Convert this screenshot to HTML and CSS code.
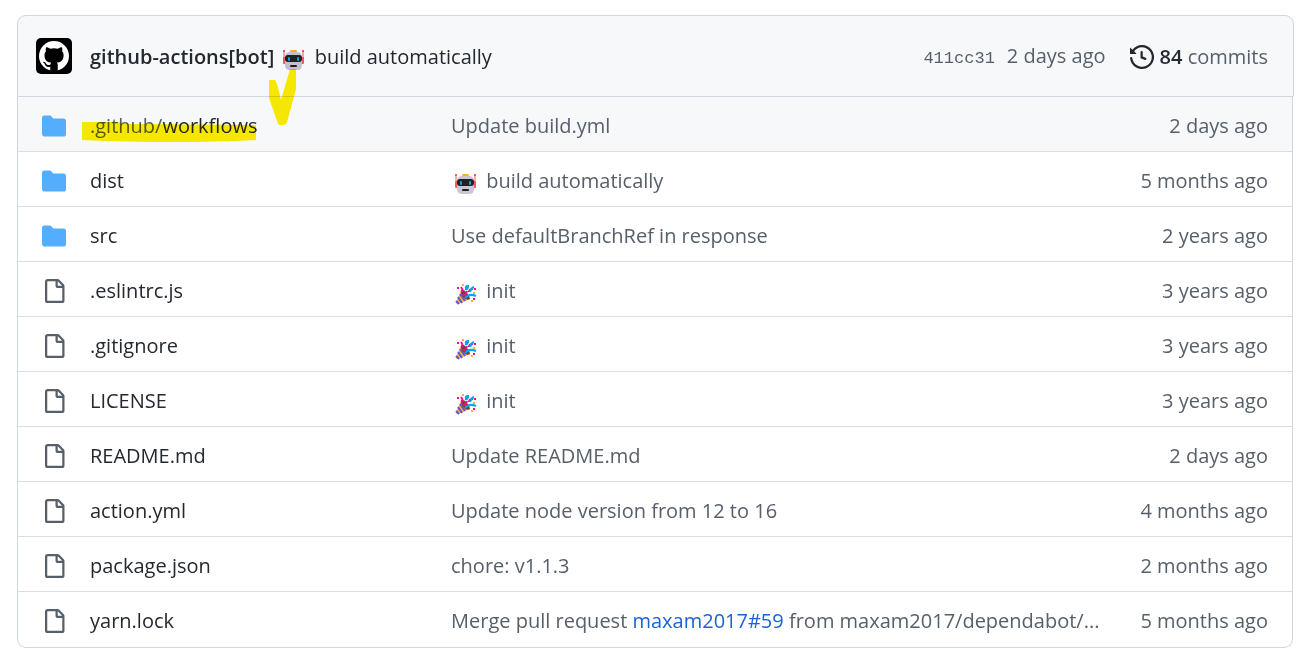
FILE: index.html
```
<!DOCTYPE html>
<html lang="en">

<head>
    <meta charset="UTF-8">
    <meta name="viewport" content="width=device-width, initial-scale=1">
    <title>Files</title>
    <link rel="stylesheet" href="styles.css">
</head>

<body>

    <!-- shared icons -->
    <svg class="sprite" aria-hidden="true">
        <symbol id="folder" viewBox="0 0 16 16">
            <path d="M1.75 1A1.75 1.75 0 0 0 0 2.75v10.5C0 14.216.784 15 1.75 15h12.5A1.75 1.75 0 0 0 16 13.25v-8.5A1.75 1.75 0 0 0 14.25 3H7.5a.25.25 0 0 1-.2-.1l-.9-1.2C6.07 1.26 5.55 1 5 1H1.75Z" />
        </symbol>
        <symbol id="file" viewBox="0 0 16 16">
            <path d="M2 1.75C2 .784 2.784 0 3.75 0h6.586c.464 0 .909.184 1.237.513l2.914 2.914c.329.328.513.773.513 1.237v9.586A1.75 1.75 0 0 1 13.25 16h-9.5A1.75 1.75 0 0 1 2 14.25Zm1.75-.25a.25.25 0 0 0-.25.25v12.5c0 .138.112.25.25.25h9.5a.25.25 0 0 0 .25-.25V6h-2.75A1.75 1.75 0 0 1 9 4.25V1.5Zm6.75.062V4.25c0 .138.112.25.25.25h2.688l-.011-.013-2.914-2.914-.013-.011Z" />
        </symbol>
        <symbol id="robot" viewBox="0 0 22 22">
            <path d="M1 2v12M20 2v12" stroke="#f8585f" stroke-width="1" />
            <circle cx="1" cy="2" r="1" fill="#f03040" />
            <circle cx="20" cy="2" r="1" fill="#f03040" />
            <rect x="0" y="8" width="3" height="7" rx="1" fill="#f8585f" />
            <rect x="18" y="8" width="3" height="7" rx="1" fill="#f8585f" />
            <path d="M6 3h9q4 1 4 5v8q0 5-5 5H7q-5 0-5-5V8q0-4 4-5Z" fill="#cdc4d6" />
            <rect x="7" y="1" width="7" height="2" rx="1" fill="#ffb02e" />
            <rect x="2" y="6" width="17" height="7" rx="3" fill="#212121" />
            <rect x="5" y="8" width="2" height="4" rx="1" fill="#00a6ed" />
            <rect x="14" y="8" width="2" height="4" rx="1" fill="#00a6ed" />
            <rect x="7" y="16" width="7" height="2" rx="1" fill="#212121" />
        </symbol>
        <symbol id="party" viewBox="0 0 22 22">
            <path d="M6 8 1 19q0 2 2 2l12-5Z" fill="#ffb02e" />
            <path d="m5 11 5 7M3 14l4 6M1 18l3 3" stroke="#5b55e0" stroke-width="2" />
            <path d="M6 7q3-1 6 3t3 6q-4 2-7-2T6 7Z" fill="#6d4534" />
            <path d="M6 9q3-1 0-5M8 12q3 0 4-4M14 9q0-3 4-3" stroke="#f70a8d" stroke-width="2" fill="none" />
            <path d="M10 6q3 1 3-3-3 0-2 3M10 15q4-5 11-2M15 9q1-4 4-5" stroke="#00a6ed" stroke-width="2" fill="none" />
            <path d="M2 4h2v2H2ZM19 5h2v2h-2ZM18 15h2v2h-2Z" fill="#f70a8d" />
            <path d="M7 1h2v2H7ZM18 9h2v2h-2ZM16 17h2v2h-2Z" fill="#ffb02e" />
        </symbol>
    </svg>

    <div class="commit">
        <svg class="avatar" viewBox="0 0 36 36" role="img" aria-label="github-actions">
            <rect width="36" height="36" rx="5" />
            <circle cx="18" cy="18" r="15" fill="#fff" />
            <path transform="translate(3 3) scale(1.875)" d="M5.47 15.59c.4.07.55-.17.55-.38 0-.19-.01-.82-.01-1.49-2.01.37-2.53-.49-2.69-.94-.09-.23-.48-.94-.82-1.13-.28-.15-.68-.52-.01-.53.63-.01 1.08.58 1.23.82.72 1.21 1.87.87 2.33.66.07-.52.28-.87.51-1.07-1.78-.2-3.64-.89-3.64-3.95 0-.87.31-1.59.82-2.15-.08-.2-.36-1.02.08-2.12 0 0 .67-.21 2.2.82.64-.18 1.32-.27 2-.27s1.36.09 2 .27c1.53-1.04 2.2-.82 2.2-.82.44 1.1.16 1.92.08 2.12.51.56.82 1.27.82 2.15 0 3.07-1.87 3.75-3.65 3.95.29.25.54.73.54 1.48 0 1.07-.01 1.93-.01 2.2 0 .21.15.46.55.38Q8 16.6 5.47 15.59Z" />
        </svg>
        <div class="commit-title">
            <a href="#" class="author">github-actions[bot]</a>
            <svg class="emoji" role="img" aria-label="robot"><use href="#robot" /></svg>
            <a href="#">build automatically</a>
            <svg class="tick" viewBox="0 0 28 58" aria-hidden="true">
                <path d="M0 12h6q2 2 6 20L21 1h6v20L18 54q-1 3-3 3h-4q-2 0-3-4L0 30Z" />
            </svg>
        </div>
        <div class="commit-meta">
            <div class="revision">
                <a href="#" class="sha">411cc31</a>
                <a href="#">2 days ago</a>
            </div>
            <a href="#" class="history">
                <svg class="icon" viewBox="0 0 16 16" aria-hidden="true"><path d="m.427 1.927 1.215 1.215a8.002 8.002 0 1 1-1.6 5.685.75.75 0 1 1 1.493-.154 6.5 6.5 0 1 0 1.18-4.458l1.358 1.358A.25.25 0 0 1 3.896 6H.25A.25.25 0 0 1 0 5.75V2.104a.25.25 0 0 1 .427-.177ZM7.75 4a.75.75 0 0 1 .75.75v2.992l2.028.812a.75.75 0 0 1-.557 1.392l-2.5-1A.751.751 0 0 1 7 8.25v-3.5A.75.75 0 0 1 7.75 4Z" /></svg>
                <span><strong>84</strong> commits</span>
            </a>
        </div>
    </div>

    <div class="files">
        <table>
            <tbody>
                <tr class="active">
                    <td class="type"><svg class="icon folder"><use href="#folder" /></svg></td>
                    <td class="name">
                        <a href="#"><span class="parent">.github/</span>workflows</a>
                        <svg class="marker" viewBox="0 0 174 20" preserveAspectRatio="none" aria-hidden="true">
                            <path d="M0 0h34l14 2 126 1v15q-80 4-174 0Z" />
                        </svg>
                    </td>
                    <td class="message"><a href="#">Update build.yml</a></td>
                    <td class="age">2 days ago</td>
                </tr>
                <tr>
                    <td class="type"><svg class="icon folder"><use href="#folder" /></svg></td>
                    <td class="name"><a href="#">dist</a></td>
                    <td class="message"><svg class="emoji" role="img" aria-label="robot"><use href="#robot" /></svg> <a href="#">build automatically</a></td>
                    <td class="age">5 months ago</td>
                </tr>
                <tr>
                    <td class="type"><svg class="icon folder"><use href="#folder" /></svg></td>
                    <td class="name"><a href="#">src</a></td>
                    <td class="message"><a href="#">Use defaultBranchRef in response</a></td>
                    <td class="age">2 years ago</td>
                </tr>
                <tr>
                    <td class="type"><svg class="icon"><use href="#file" /></svg></td>
                    <td class="name"><a href="#">.eslintrc.js</a></td>
                    <td class="message"><svg class="emoji" role="img" aria-label="tada"><use href="#party" /></svg> <a href="#">init</a></td>
                    <td class="age">3 years ago</td>
                </tr>
                <tr>
                    <td class="type"><svg class="icon"><use href="#file" /></svg></td>
                    <td class="name"><a href="#">.gitignore</a></td>
                    <td class="message"><svg class="emoji" role="img" aria-label="tada"><use href="#party" /></svg> <a href="#">init</a></td>
                    <td class="age">3 years ago</td>
                </tr>
                <tr>
                    <td class="type"><svg class="icon"><use href="#file" /></svg></td>
                    <td class="name"><a href="#">LICENSE</a></td>
                    <td class="message"><svg class="emoji" role="img" aria-label="tada"><use href="#party" /></svg> <a href="#">init</a></td>
                    <td class="age">3 years ago</td>
                </tr>
                <tr>
                    <td class="type"><svg class="icon"><use href="#file" /></svg></td>
                    <td class="name"><a href="#">README.md</a></td>
                    <td class="message"><a href="#">Update README.md</a></td>
                    <td class="age">2 days ago</td>
                </tr>
                <tr>
                    <td class="type"><svg class="icon"><use href="#file" /></svg></td>
                    <td class="name"><a href="#">action.yml</a></td>
                    <td class="message"><a href="#">Update node version from 12 to 16</a></td>
                    <td class="age">4 months ago</td>
                </tr>
                <tr>
                    <td class="type"><svg class="icon"><use href="#file" /></svg></td>
                    <td class="name"><a href="#">package.json</a></td>
                    <td class="message"><a href="#">chore: v1.1.3</a></td>
                    <td class="age">2 months ago</td>
                </tr>
                <tr>
                    <td class="type"><svg class="icon"><use href="#file" /></svg></td>
                    <td class="name"><a href="#">yarn.lock</a></td>
                    <td class="message"><a href="#">Merge pull request</a> <a href="#" class="issue">maxam2017#59</a> <a href="#">from maxam2017/dependabot/...</a></td>
                    <td class="age">5 months ago</td>
                </tr>
            </tbody>
        </table>
    </div>

</body>

</html>
```
FILE: styles.css
```
* {
    box-sizing: border-box;
}

body {
    margin: 0;
    padding: 15px 11px 13px 17px;
    background-color: #fff;
    color: #24292f;
    font-family: "Segoe UI", "Open Sans", "Noto Sans", sans-serif;
    font-size: 20px;
    line-height: 30px;
}

a {
    color: inherit;
    text-decoration: none;
}

svg {
    flex-shrink: 0;
}

.sprite {
    display: none;
}

.icon {
    display: block;
    width: 24px;
    height: 24px;
    fill: #57606a;
}

.folder {
    fill: #54aeff;
}

.emoji {
    display: inline-block;
    width: 22px;
    height: 22px;
    margin: 0 4px;
    vertical-align: -7px;
}

.commit {
    display: flex;
    align-items: center;
    height: 82px;
    padding: 0 25px 0 18px;
    background-color: #f6f8fa;
    border: 1px solid #d0d7de;
    border-radius: 9px 9px 0 0;
}

.avatar {
    width: 36px;
    height: 36px;
    margin-right: 18px;
}

.commit-title {
    position: relative;
    z-index: 1;
    flex: 1;
    padding-top: 2px;
    white-space: nowrap;
    mix-blend-mode: multiply;
}

.author {
    font-weight: 600;
}

.commit-meta {
    display: flex;
    align-items: center;
    gap: 24px;
    padding-top: 2px;
    color: #57606a;
    white-space: nowrap;
}

.revision {
    display: flex;
    align-items: baseline;
    gap: 12px;
}

.sha {
    font-family: "Liberation Mono", monospace;
    font-size: 17px;
}

.history {
    display: flex;
    align-items: center;
    gap: 6px;
}

.history .icon,
.history strong {
    color: #24292f;
    fill: #24292f;
    font-weight: 600;
}

.files {
    margin-right: 1px;
    border: 1px solid #d0d7de;
    border-top: 0;
    border-radius: 0 0 9px 9px;
    overflow: hidden;
}

table {
    width: 100%;
    border-collapse: separate;
    border-spacing: 0;
    table-layout: fixed;
}

td {
    height: 55px;
    padding: 4px 0 0;
    border-bottom: 1px solid #d8dee4;
    white-space: nowrap;
}

tr:last-child td {
    border-bottom-color: transparent;
}

.active td {
    background-color: #f6f8fa;
}

.type {
    width: 72px;
    padding-left: 24px;
}

.name {
    position: relative;
    width: 361px;
}

.parent {
    color: #57606a;
}

.message {
    color: #57606a;
}

.issue {
    color: #1b62d9;
}

.age {
    width: 180px;
    padding-right: 24px;
    color: #57606a;
    text-align: right;
}

/* highlighter strokes */
.marker,
.tick {
    position: absolute;
    fill: #ffee00;
    mix-blend-mode: multiply;
    pointer-events: none;
}

.marker {
    left: -8px;
    top: 25px;
    width: 174px;
    height: 20px;
}

.tick {
    left: 179px;
    top: 28px;
    width: 28px;
    height: 58px;
}
```
